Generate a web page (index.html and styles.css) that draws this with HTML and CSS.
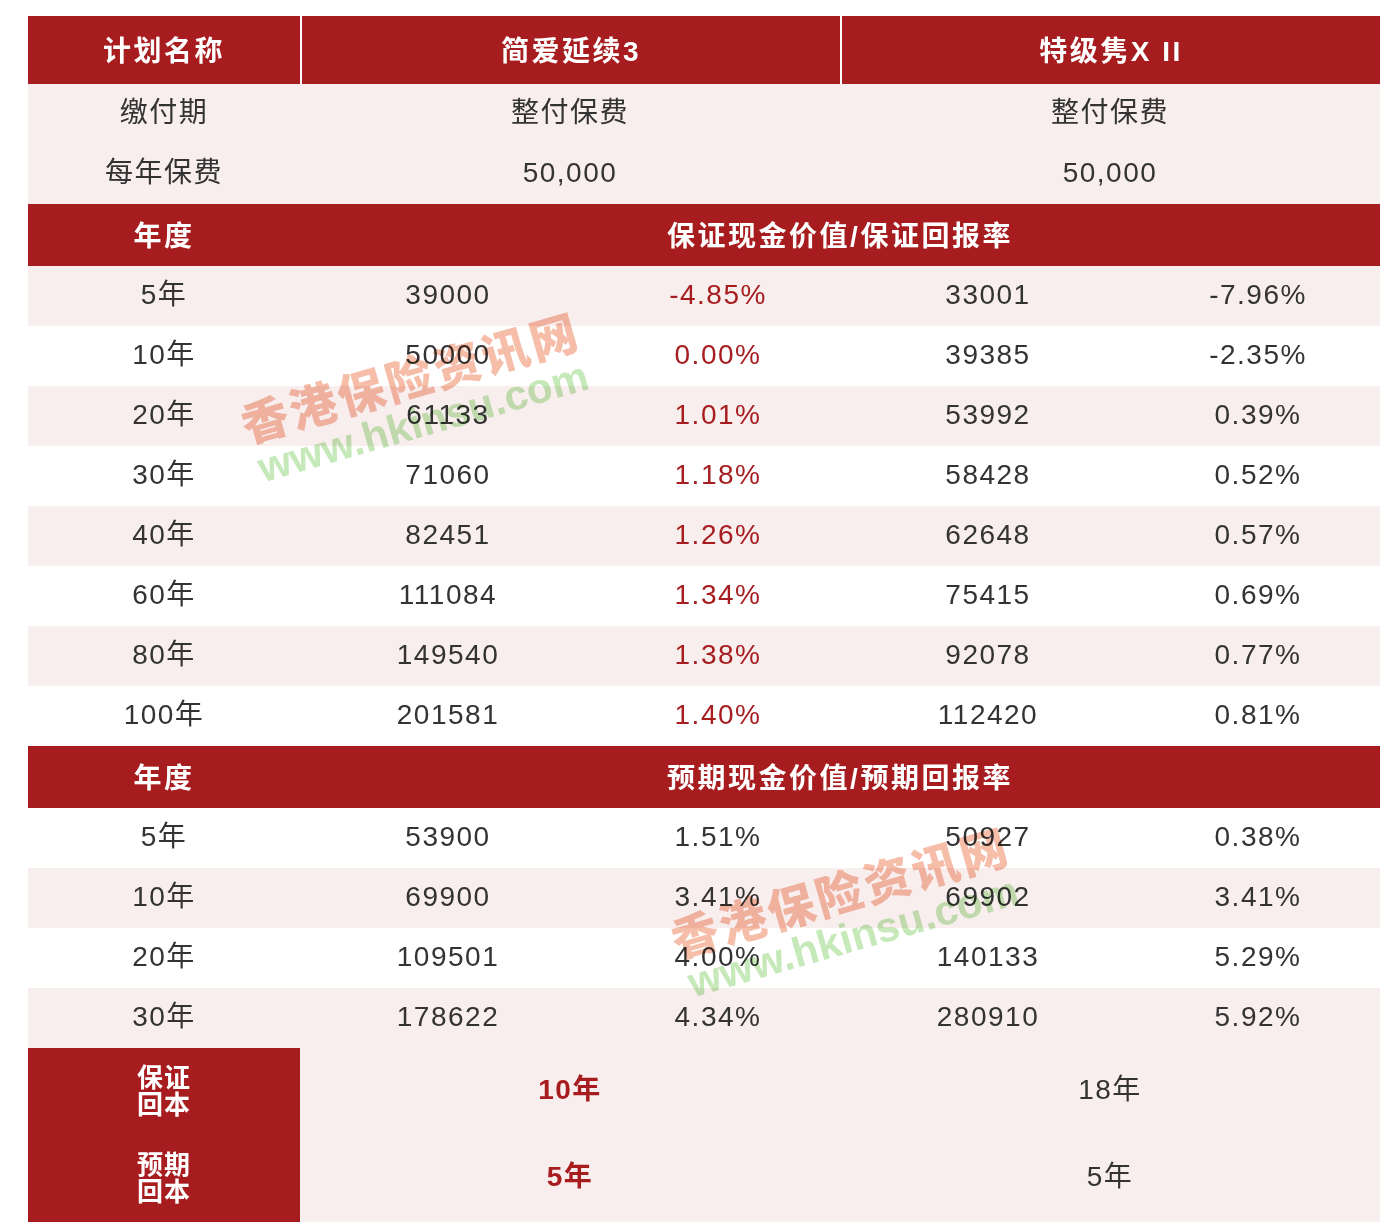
FILE: index.html
```html
<!DOCTYPE html>
<html lang="zh">
<head>
<meta charset="utf-8">
<title>计划对比</title>
<link rel="stylesheet" href="styles.css">
</head>
<body>
<div class="page">
  <div class="table">
    <div class="row head top">
      <div class="c c1">计划名称</div>
      <div class="c span2 sep">简爱延续3</div>
      <div class="c span2 sep">特级隽X II</div>
    </div>
    <div class="row info pink">
      <div class="c c1">缴付期</div>
      <div class="c span2">整付保费</div>
      <div class="c span2">整付保费</div>
    </div>
    <div class="row info pink">
      <div class="c c1">每年保费</div>
      <div class="c span2">50,000</div>
      <div class="c span2">50,000</div>
    </div>

    <div class="row head sect">
      <div class="c c1">年度</div>
      <div class="c span4">保证现金价值/保证回报率</div>
    </div>
    <div class="row data pink"><div class="c c1">5年</div><div class="c v">39000</div><div class="c v red">-4.85%</div><div class="c v">33001</div><div class="c v">-7.96%</div></div>
    <div class="row data"><div class="c c1">10年</div><div class="c v">50000</div><div class="c v red">0.00%</div><div class="c v">39385</div><div class="c v">-2.35%</div></div>
    <div class="row data pink"><div class="c c1">20年</div><div class="c v">61133</div><div class="c v red">1.01%</div><div class="c v">53992</div><div class="c v">0.39%</div></div>
    <div class="row data"><div class="c c1">30年</div><div class="c v">71060</div><div class="c v red">1.18%</div><div class="c v">58428</div><div class="c v">0.52%</div></div>
    <div class="row data pink"><div class="c c1">40年</div><div class="c v">82451</div><div class="c v red">1.26%</div><div class="c v">62648</div><div class="c v">0.57%</div></div>
    <div class="row data"><div class="c c1">60年</div><div class="c v">111084</div><div class="c v red">1.34%</div><div class="c v">75415</div><div class="c v">0.69%</div></div>
    <div class="row data pink"><div class="c c1">80年</div><div class="c v">149540</div><div class="c v red">1.38%</div><div class="c v">92078</div><div class="c v">0.77%</div></div>
    <div class="row data"><div class="c c1">100年</div><div class="c v">201581</div><div class="c v red">1.40%</div><div class="c v">112420</div><div class="c v">0.81%</div></div>

    <div class="row head sect">
      <div class="c c1">年度</div>
      <div class="c span4">预期现金价值/预期回报率</div>
    </div>
    <div class="row data"><div class="c c1">5年</div><div class="c v">53900</div><div class="c v">1.51%</div><div class="c v">50927</div><div class="c v">0.38%</div></div>
    <div class="row data pink"><div class="c c1">10年</div><div class="c v">69900</div><div class="c v">3.41%</div><div class="c v">69902</div><div class="c v">3.41%</div></div>
    <div class="row data"><div class="c c1">20年</div><div class="c v">109501</div><div class="c v">4.00%</div><div class="c v">140133</div><div class="c v">5.29%</div></div>
    <div class="row data pink"><div class="c c1">30年</div><div class="c v">178622</div><div class="c v">4.34%</div><div class="c v">280910</div><div class="c v">5.92%</div></div>

    <div class="row foot pink">
      <div class="c c1 label"><span>保证</span><span>回本</span></div>
      <div class="c span2 strong">10年</div>
      <div class="c span2">18年</div>
    </div>
    <div class="row foot pink">
      <div class="c c1 label"><span>预期</span><span>回本</span></div>
      <div class="c span2 strong">5年</div>
      <div class="c span2">5年</div>
    </div>
  </div>

  <div class="wm wm1">
    <div class="wm-cn">香港保险资讯网</div>
    <div class="wm-en">www.hkinsu.com</div>
  </div>
  <div class="wm wm2">
    <div class="wm-cn">香港保险资讯网</div>
    <div class="wm-en">www.hkinsu.com</div>
  </div>
</div>
</body>
</html>
```

FILE: styles.css
```css
html, body {
  margin: 0;
  padding: 0;
  background: #ffffff;
}

body {
  font-family: "Liberation Sans", "Noto Sans CJK SC", sans-serif;
  color: #333333;
}

.page {
  position: relative;
  padding: 16px 18px 0 28px;
  width: 1352px;
  height: 1216px;
}

.table {
  width: 1352px;
  display: flex;
  flex-direction: column;
}

.row {
  display: grid;
  grid-template-columns: 272px repeat(4, 1fr);
  align-items: stretch;
}

.c {
  display: flex;
  align-items: center;
  justify-content: center;
  text-align: center;
  font-size: 28px;
  line-height: 32px;
  letter-spacing: 1.5px;
  padding-bottom: 3px;
  box-sizing: border-box;
}

.span2 { grid-column: span 2; }
.span4 { grid-column: span 4; }

.pink { background: #f8eeee; }

.head {
  background: #a71d1f;
  color: #ffffff;
}
.head .c {
  font-weight: bold;
  font-size: 28px;
  letter-spacing: 2.5px;
  padding-top: 3px;
  padding-bottom: 0;
}
.head.top { height: 68px; }
.head.top .sep { border-left: 2px solid #ffffff; }
.head.sect { height: 62px; }

.info { height: 60px; }
.data { height: 60px; }

.data .v { padding-left: 26px; }

.red { color: #a71d1f; }

.foot { height: 87px; }
.foot .label {
  flex-direction: column;
  background: #a71d1f;
  color: #ffffff;
  font-weight: bold;
  font-size: 26px;
  line-height: 28px;
  letter-spacing: 1px;
  padding-bottom: 2px;
}
.foot .label span {
  display: block;
  height: 27px;
}
.foot .strong {
  color: #a71d1f;
  font-weight: bold;
}

/* watermark overlays */
.wm {
  position: absolute;
  width: 480px;
  text-align: center;
  transform: rotate(-16deg);
  pointer-events: none;
  font-family: "Noto Sans CJK SC", "Liberation Sans", sans-serif;
  font-weight: 900;
  mix-blend-mode: multiply;
}
.wm1 { left: 176px; top: 349px; }
.wm2 { left: 606px; top: 864px; }

.wm-cn {
  font-size: 47px;
  line-height: 52px;
  letter-spacing: 3px;
  color: #f6bda9;
}
.wm-en {
  font-family: "Liberation Sans", sans-serif;
  font-weight: bold;
  font-size: 42px;
  line-height: 44px;
  letter-spacing: 0px;
  color: #c6e9b9;
}
```
